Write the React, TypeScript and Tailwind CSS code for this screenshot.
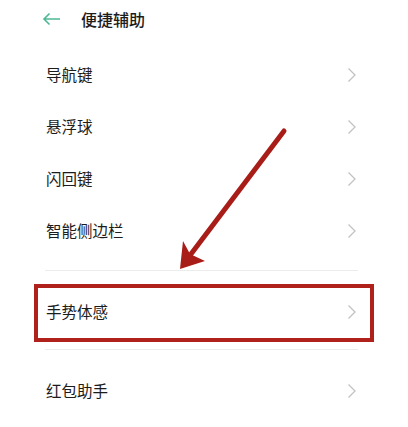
const font = { fontFamily: '"Noto Sans CJK SC", "Noto Sans", sans-serif' }

function Chevron() {
  return (
    <svg width="10" height="16" viewBox="0 0 10 16" className="text-[#c2c2c2]">
      <path d="M1.5 1.5 8 8l-6.5 6.5" fill="none" stroke="currentColor" strokeWidth="1.3" />
    </svg>
  )
}

function Row({ label }: { label: string }) {
  return (
    <div className="flex h-[52px] items-center justify-between pr-[51px]">
      <span className="text-[15.5px] text-[#1c1c1c]">{label}</span>
      <Chevron />
    </div>
  )
}

export default function App() {
  return (
    <div className="relative h-[427px] w-[408px] overflow-hidden bg-white" style={font}>
      <div className="flex h-[36px] items-center pl-[42px] pt-[1px]">
        <svg width="19" height="14" viewBox="0 0 19 14" className="text-[#4cb896]">
          <path d="M18 7H2M7.5 1.5 2 7l5.5 5.5" fill="none" stroke="currentColor" strokeWidth="1.6" />
        </svg>
        <span className="ml-[20px] text-[16px] font-medium text-[#1c1c1c]">便捷辅助</span>
      </div>
      <div className="pl-[46px] pt-[13px]">
        <Row label="导航键" />
        <Row label="悬浮球" />
        <Row label="闪回键" />
        <Row label="智能侧边栏" />
      </div>
      <div className="ml-[45px] mr-[50px] mt-[13px] h-px bg-[#ececec]" />
      <div className="mx-[34px] mt-[13px] flex h-[58px] items-center justify-between border-[4px] border-[#b1211c] pb-[3px] pl-[8px] pr-[13px]">
        <span className="text-[15.5px] text-[#1c1c1c]">手势体感</span>
        <Chevron />
      </div>
      <div className="ml-[45px] mr-[50px] mt-[7px] h-px bg-[#ececec]" />
      <div className="pl-[46px] pt-[15px]">
        <Row label="红包助手" />
      </div>

      <svg className="absolute left-0 top-0" width="408" height="427" viewBox="0 0 408 427">
        <line x1="284" y1="131" x2="188" y2="258" stroke="#a91d18" strokeWidth="5" strokeLinecap="round" />
        <path d="M180 269 L183 241 L190 254 L205 261 Z" fill="#a91d18" />
      </svg>
    </div>
  )
}
